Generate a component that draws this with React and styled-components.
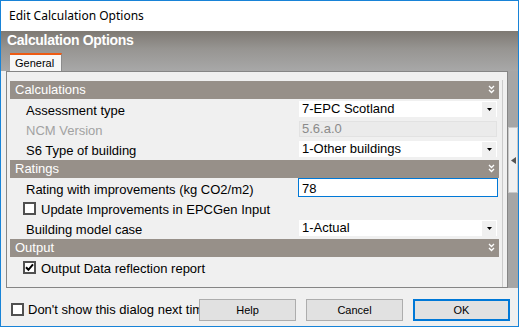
import styled, { createGlobalStyle } from "styled-components";

const GlobalStyle = createGlobalStyle`
    html, body {
        margin: 0;
        padding: 0;
        background: #ffffff;
    }
`;

const calculations = [
    { label: "Assessment type", kind: "select", value: "7-EPC Scotland" },
    { label: "NCM Version", kind: "readonly", value: "5.6.a.0", disabled: true },
    { label: "S6 Type of building", kind: "select", value: "1-Other buildings" },
];

function Chevrons() {
    return (
        <svg width="7" height="9" viewBox="0 0 7 9">
            <polyline points="1,1 3.5,3.5 6,1" fill="none" stroke="#ffffff" strokeWidth="1.3" />
            <polyline points="1,5 3.5,7.5 6,5" fill="none" stroke="#ffffff" strokeWidth="1.3" />
        </svg>
    );
}

function CheckBox({ checked }) {
    return (
        <Box>
            {checked && (
                <svg width="9" height="9" viewBox="0 0 9 9">
                    <polyline points="1,4.3 3.4,6.8 8,1.3" fill="none" stroke="#000000" strokeWidth="2" />
                </svg>
            )}
        </Box>
    );
}

function Select({ value }) {
    return (
        <SelectBox>
            <span>{value}</span>
            <ArrowButton>
                <svg width="5" height="3" viewBox="0 0 5 3">
                    <polygon points="0,0 5,0 2.5,3" fill="#000000" />
                </svg>
            </ArrowButton>
        </SelectBox>
    );
}

function Category({ title }) {
    return (
        <CategoryHeader>
            <span>{title}</span>
            <Chevrons />
        </CategoryHeader>
    );
}

export default function App() {
    return (
        <>
            <GlobalStyle />
            <Window>
                <TitleBar>Edit Calculation Options</TitleBar>

                <Header>
                    <HeaderTitle>Calculation Options</HeaderTitle>
                    <TabStrip>
                        <Tab>General</Tab>
                    </TabStrip>
                </Header>

                <Body>
                    <Gutter />
                    <TabPanel>
                        <Grid>
                            <Category title="Calculations" />
                            {calculations.map((item) => (
                                <Row key={item.label}>
                                    <Label $disabled={item.disabled}>{item.label}</Label>
                                    {item.kind === "select" ? (
                                        <Select value={item.value} />
                                    ) : (
                                        <ReadOnlyBox>{item.value}</ReadOnlyBox>
                                    )}
                                </Row>
                            ))}

                            <Category title="Ratings" />
                            <Row>
                                <Label>Rating with improvements (kg CO2/m2)</Label>
                                <TextInput>78</TextInput>
                            </Row>
                            <CheckRow>
                                <CheckBox />
                                <CheckText>Update Improvements in EPCGen Input</CheckText>
                            </CheckRow>
                            <Row>
                                <Label>Building model case</Label>
                                <Select value="1-Actual" />
                            </Row>

                            <Category title="Output" />
                            <CheckRow>
                                <CheckBox checked />
                                <CheckText>Output Data reflection report</CheckText>
                            </CheckRow>
                        </Grid>
                    </TabPanel>
                    <SideStrip>
                        <Expander>
                            <svg width="5" height="7" viewBox="0 0 5 7">
                                <polygon points="5,0 5,7 0,3.5" fill="#555555" />
                            </svg>
                        </Expander>
                    </SideStrip>
                </Body>

                <Footer>
                    <DontShow>
                        <CheckBox />
                        <DontShowText>Don't show this dialog next time</DontShowText>
                    </DontShow>
                    <Button>Help</Button>
                    <Button>Cancel</Button>
                    <Button $primary>OK</Button>
                </Footer>
            </Window>
        </>
    );
}

const Window = styled.div`
    width: 519px;
    height: 327px;
    box-sizing: border-box;
    border: 1px solid #1883d7;
    display: flex;
    flex-direction: column;
    background: #f0f0f0;
    font-family: "Liberation Sans", Arial, sans-serif;
    color: #000000;
`;

const TitleBar = styled.div`
    height: 30px;
    flex: none;
    background: #ffffff;
    padding-left: 8px;
    font-family: "Noto Sans", "Open Sans", sans-serif;
    font-size: 12px;
    line-height: 30px;
    color: #000000;
`;

const Header = styled.div`
    height: 40px;
    flex: none;
    display: flex;
    flex-direction: column;
    background: linear-gradient(to bottom, #7e7973 0%, #979592 45%, #a8a8a8 100%);
`;

const HeaderTitle = styled.div`
    height: 21px;
    padding-left: 6px;
    font-size: 14px;
    font-weight: bold;
    letter-spacing: -0.3px;
    line-height: 19px;
    color: #ffffff;
`;

const TabStrip = styled.div`
    height: 19px;
    padding-left: 9px;
    display: flex;
    align-items: flex-end;
`;

const Tab = styled.div`
    width: 52px;
    height: 18px;
    box-sizing: border-box;
    border-top: 2px solid #ee5a12;
    border-right: 1px solid #8c8c8c;
    background: #f7f7f7;
    padding: 1px 0 0 5px;
    font-size: 11px;
    line-height: 15px;
`;

const Body = styled.div`
    height: 217px;
    flex: none;
    display: flex;
`;

const Gutter = styled.div`
    width: 5px;
    background: #f0f0f0;
`;

const TabPanel = styled.div`
    width: 502px;
    box-sizing: border-box;
    border: 1px solid #858585;
    background: #f0f0f0;
    padding: 8px 4px 0 3px;
    display: flex;
`;

const Grid = styled.div`
    width: 493px;
    box-sizing: border-box;
    padding-right: 3px;
    border-right: 1px solid #cbcbcb;
    display: flex;
    flex-direction: column;
`;

const CategoryHeader = styled.div`
    height: 18px;
    margin-top: 1px;
    flex: none;
    display: flex;
    align-items: center;
    justify-content: space-between;
    padding: 0 4px 0 5px;
    background: #979089;
    color: #ffffff;
    font-size: 13px;
    line-height: 18px;

    svg {
        margin-top: -1px;
    }
`;

const Row = styled.div`
    height: 20px;
    flex: none;
    display: flex;
    align-items: flex-start;
`;

const Label = styled.div`
    width: 289px;
    height: 20px;
    box-sizing: border-box;
    flex: none;
    padding: 3px 0 0 16px;
    font-size: 13px;
    line-height: 17px;
    white-space: nowrap;
    color: ${(p) => (p.$disabled ? "#a2a2a2" : "#000000")};
`;

const SelectBox = styled.div`
    width: 198px;
    height: 16px;
    margin-top: 2px;
    flex: none;
    display: flex;
    justify-content: space-between;
    background: #ffffff;
    font-size: 13px;
    line-height: 16px;

    span {
        padding-left: 3px;
        white-space: nowrap;
    }
`;

const ArrowButton = styled.div`
    width: 14px;
    height: 15px;
    margin: 1px 1px 0 0;
    display: flex;
    align-items: center;
    justify-content: center;
    background: #f0f0f0;
`;

const ReadOnlyBox = styled.div`
    width: 198px;
    height: 16px;
    margin-top: 2px;
    box-sizing: border-box;
    flex: none;
    padding-left: 2px;
    border: 1px solid #e2e2e2;
    background: #ebebeb;
    color: #8a8a8a;
    font-size: 13px;
    line-height: 14px;
`;

const TextInput = styled.div`
    width: 200px;
    height: 19px;
    margin-left: -1px;
    box-sizing: border-box;
    flex: none;
    border: 1px solid #0078d7;
    background: #ffffff;
    padding: 2px 0 0 3px;
    font-size: 13px;
    line-height: 15px;
`;

const CheckRow = styled.div`
    height: 20px;
    flex: none;
    display: flex;
    align-items: flex-start;
    gap: 5px;
    padding-left: 13px;

    & > span {
        margin-top: 4px;
    }
`;

const Box = styled.span`
    width: 13px;
    height: 13px;
    box-sizing: border-box;
    flex: none;
    display: flex;
    align-items: center;
    justify-content: center;
    border: 2px solid #505050;
    background: #ffffff;
`;

const CheckText = styled.div`
    padding-top: 3px;
    font-size: 13px;
    line-height: 17px;
    white-space: nowrap;
`;

const SideStrip = styled.div`
    width: 10px;
    display: flex;
    flex-direction: column;
    background: #a6a6a6;
`;

const Expander = styled.div`
    margin-top: 56px;
    height: 66px;
    width: 10px;
    box-sizing: border-box;
    border: 1px solid #c9c9c9;
    background: #f0f0f0;
    display: flex;
    align-items: center;
    justify-content: center;
`;

const Footer = styled.div`
    height: 38px;
    flex: none;
    box-sizing: border-box;
    display: flex;
    align-items: center;
    gap: 10px;
    padding: 5px 8px 0 10px;
    background: #f0f0f0;
`;

const DontShow = styled.div`
    flex: 1;
    min-width: 0;
    margin-right: -10px;
    display: flex;
    align-items: center;
    gap: 4px;
    overflow: hidden;
`;

const DontShowText = styled.span`
    font-size: 13px;
    line-height: 15px;
    white-space: nowrap;
`;

const Button = styled.div`
    width: 97px;
    height: 22px;
    flex: none;
    box-sizing: border-box;
    display: flex;
    align-items: center;
    justify-content: center;
    border: ${(p) => (p.$primary ? "2px solid #0078d7" : "1px solid #adadad")};
    background: #e1e1e1;
    font-size: 11px;
`;
